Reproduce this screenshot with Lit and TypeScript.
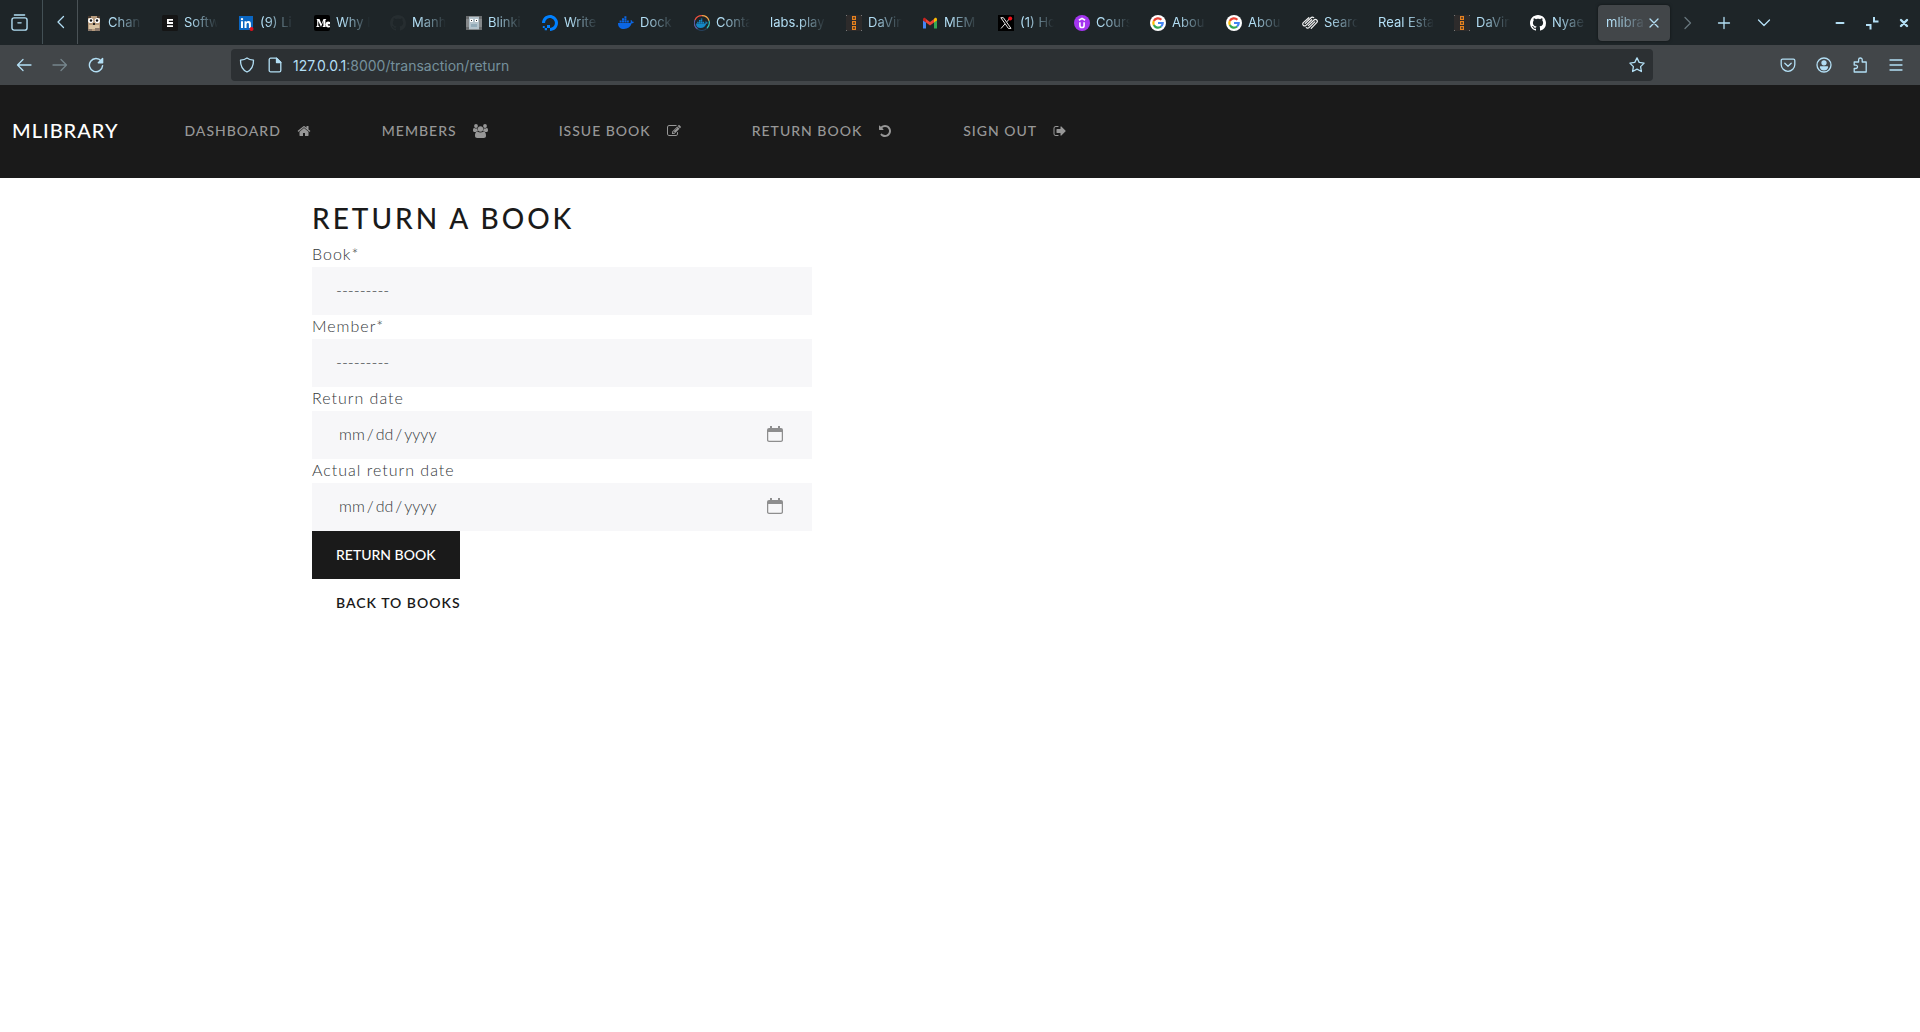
import { LitElement, html, svg, css } from "lit";
import type { TemplateResult } from "lit";

type Pic = TemplateResult;

const box = (size: number, view: string, body: Pic): Pic =>
  html`<svg width=${size} height=${size} viewBox=${view} aria-hidden="true">${body}</svg>`;
const line = (body: Pic, size = 16, width = 1.3): Pic =>
  html`<svg width=${size} height=${size} viewBox="0 0 16 16" fill="none" stroke="currentColor"
    stroke-width=${width} stroke-linecap="round" stroke-linejoin="round" aria-hidden="true">${body}</svg>`;

/* ---------- tab favicons ---------- */
const gopher = box(16, "0 0 16 16", svg`
  <rect x="2" y="1" width="12" height="15" rx="1" fill="#b59a7c"/>
  <path d="M2 1h3v2H2zM11 1h3v2h-3z" fill="#4a3b30"/>
  <rect x="3" y="10" width="10" height="4" fill="#d9c4a4"/>
  <path d="M2 14h4v2H2zM9 13h5v3H9z" fill="#8c7a6c"/>
  <circle cx="4.7" cy="5.5" r="2.600" fill="#fff"/><circle cx="11.3" cy="5.5" r="2.600" fill="#fff"/>
  <circle cx="5" cy="5.5" r="1.2" fill="#111"/><circle cx="11" cy="5.5" r="1.2" fill="#111"/>
  <rect x="7" y="8" width="2" height="2" fill="#222"/>`);
const eLogo = box(16, "0 0 16 16", svg`
  <rect width="16" height="16" rx="1.5" fill="#151515"/>
  <path d="M5 4h6v1.800H5zM5 5h1.800v3H5zM5 7.100h6v1.800H5zM5 10.200h6V12H5z" fill="#fff"/>`);
const linkedin = box(16, "0 0 16 16", svg`
  <rect x="1" y="1" width="14" height="14" fill="#0a66c2"/>
  <path d="M3 6.300h2V13H3zM6.500 6.300h1.900v.9c.4-.7 1.100-1.100 2-1.100 2 0 2.500 1.200 2.500 3V13h-2V9.500c0-.9-.2-1.600-1.100-1.600-.9 0-1.300.6-1.300 1.600V13h-2z" fill="#fff"/>
  <circle cx="4" cy="4.100" r="1.200" fill="#fff"/><circle cx="13.500" cy="14" r="2" fill="#e0101c"/>`);
const medium = box(16, "0 0 16 16", svg`
  <rect width="16" height="16" rx="2" fill="#000"/>
  <path d="M2.500 4h3l2 5 2-5h2.700v.5l-.8.600v6.300l.8.600H8.600v-.6l.8-.6V6L7 12.100 4.300 6v4.600l1.100 1v.4H2.300v-.5l.9-.9V5.300z" fill="#fff"/>
  <path d="M16 7a3 3 0 1 0 0 5v-1.500c-1.300.6-2.100 0-2.200-1.300H16z" fill="#fff"/>`);
const githubPath = svg`<path fill="currentColor" d="M8 0C3.580 0 0 3.580 0 8c0 3.540 2.290 6.530 5.470 7.590.4.07.55-.17.55-.38 0-.19-.01-.82-.01-1.490-2.010.37-2.530-.49-2.690-.94-.09-.23-.48-.94-.82-1.130-.28-.15-.68-.52-.01-.53.63-.01 1.080.58 1.230.82.72 1.210 1.870.87 2.330.66.07-.52.28-.87.51-1.070-1.780-.2-3.640-.89-3.640-3.950 0-.87.31-1.590.82-2.150-.08-.2-.36-1.020.08-2.120 0 0 .67-.21 2.200.82.64-.18 1.320-.27 2-.27.68 0 1.360.09 2 .27 1.530-1.040 2.200-.82 2.200-.82.44 1.100.16 1.920.08 2.120.51.56.82 1.270.82 2.150 0 3.070-1.870 3.750-3.650 3.950.29.25.54.73.54 1.480 0 1.070-.01 1.930-.01 2.200 0 .21.15.46.55.38A8.013 8.013 0 0 0 16 8c0-4.420-3.580-8-8-8z"/>`;
const githubDark = html`<span class="dark">${box(16, "0 0 16 16", githubPath)}</span>`;
const githubLight = html`<span class="light">${box(16, "0 0 16 16", githubPath)}</span>`;
const robot = box(16, "0 0 16 16", svg`
  <rect y="1" width="16" height="14" fill="#85888a"/><rect x="3" y="2" width="10" height="12" fill="#b4c3cc"/>
  <rect x="4" y="4" width="3" height="3" fill="#fff"/><rect x="9" y="4" width="3" height="3" fill="#fff"/>
  <rect x="5" y="5" width="1" height="1" fill="#333"/><rect x="10" y="5" width="1" height="1" fill="#333"/>
  <rect x="5" y="9" width="6" height="3" fill="#93abb8"/><path d="M0 1h3v3H0zM13 1h3v3h-3zM0 12h3v3H0zM13 12h3v3h-3z" fill="#6a6d6f"/>`);
const digitalOcean = box(16, "0 0 16 16", svg`
  <path d="M8 16v-3.100c3.300 0 5.800-3.300 4.600-6.700A4.700 4.700 0 0 0 9.800 3.400C6.400 2.200 3.100 4.700 3.100 8H0C0 2.800 5.100-1.300 10.500.4c2.400.7 4.300 2.700 5.100 5.100C17.300 10.900 13.200 16 8 16z" fill="#0080ff"/>
  <path d="M5 9.900h3V13H5zM2.700 13H5v2.300H2.700zM.8 11.100h1.900V13H.8z" fill="#0080ff"/>`);
const whale = svg`<path d="M0 8h12.300c.5-.6.700-1.400.2-2.500l.6-.6c.9.500 1.200 1.100 1.200 1.800.6-.1 1.300 0 1.700.3-.4.900-1.200 1.300-2.300 1.300C12.500 12 9.800 14 6 14 2.200 14 0 12 0 8zM1.600 5.600h2v1.900h-2zM4 5.600h2v1.900H4zM6.400 5.600h2v1.900h-2zM8.800 5.600h2v1.900h-2zM4 3.300h2v1.900H4zM6.400 3.300h2v1.900h-2zM6.400 1.200h2v1.700h-2z"/>`;
const docker = box(16, "0 0 16 16", svg`<g fill="#0b66e4">${whale}</g>`);
const dockerRing = box(16, "0 0 16 16", svg`
  <g fill="none" stroke-width="1.200"><path d="M1 5a7.400 7.400 0 0 1 7-4.300" stroke="#f0523f"/><path d="M8 .7a7.400 7.400 0 0 1 7 5" stroke="#f6a54a"/>
  <path d="M15 5.700a7.400 7.400 0 0 1-2 7.500" stroke="#35c3b8"/><path d="M13 13.200a7.400 7.400 0 0 1-9.500.7" stroke="#26415c"/><path d="M3.500 13.900A7.400 7.400 0 0 1 1 5" stroke="#5b5ea8"/></g>
  <g fill="#1488c6" transform="translate(2 2.500) scale(.75)">${whale}</g>`);
const daVinci = box(16, "0 0 16 16", svg`
  <rect width="16" height="16" fill="#2d2b2b"/>
  <g fill="none" stroke="#e8821e" stroke-width="1.200"><rect x="6.600" y="1.600" width="2.800" height="2.800"/><rect x="6.600" y="6.600" width="2.800" height="2.800"/><rect x="6.600" y="11.600" width="2.800" height="2.800"/></g>
  <path d="M0 0h1v1H0zM15 0h1v1h-1zM0 15h1v1H0zM15 15h1v1h-1z" fill="#777"/>`);
const gmail = box(16, "0 0 16 16", svg`
  <path d="M1 5v8.500h3V7.300z" fill="#4285f4"/><path d="M15 5v8.500h-3V7.300z" fill="#34a853"/>
  <path d="M4 4v3.600l4 3 4-3V4L8 7z" fill="#ea4335"/><path d="M1 4.200v1.200l3 2.200V4L3.300 3C2.300 2.300 1 3 1 4.200z" fill="#c5221f"/>
  <path d="M15 4.200v1.200l-3 2.200V4l.7-1c1-.7 2.300 0 2.300 1.200z" fill="#fbbc04"/>`);
const xLogo = box(16, "0 0 16 16", svg`
  <rect width="16" height="16" fill="#000"/>
  <g fill="none" stroke="#e8e8e8"><path d="M2.800 2.700h2.600l7.600 10.700h-2.600z"/><path d="M12.400 2.600 8.900 6.800M6.900 9 3 13.500"/></g>
  <circle cx="12.200" cy="3.500" r="2" fill="#f0121c"/>`);
const udemy = box(16, "0 0 16 16", svg`
  <circle cx="8" cy="8" r="8" fill="#a435f0"/>
  <path d="M4.900 5.200 8 3.400l3.100 1.800M5.900 7.300v3.100c0 2.800 4.200 2.800 4.200 0V7.300" fill="none" stroke="#fff" stroke-width="1.600"/>`);
const google = box(16, "0 0 16 16", svg`
  <circle cx="8" cy="8" r="8" fill="#fff"/><g fill="none" stroke-width="2.200">
  <path d="M11.400 4.700A4.700 4.700 0 0 0 3.800 6" stroke="#ea4335"/><path d="M3.800 6a4.700 4.700 0 0 0 0 4.100" stroke="#fbbc05"/>
  <path d="M3.800 10.100a4.700 4.700 0 0 0 7.300 1.400" stroke="#34a853"/><path d="M11.100 11.500A4.600 4.600 0 0 0 12.700 8H8" stroke="#4285f4"/></g>`);
const squarespace = box(16, "0 0 16 16", svg`
  <g fill="none" stroke="#f4f4f4" stroke-width="1.200" stroke-linecap="round">
  <path d="M6.800 2.700 1.300 7.600a1.900 1.900 0 0 0 2.700 2.700L9.700 4.700"/>
  <path d="M3.200 8.400 9 2.700a1.900 1.900 0 0 1 2.700 0"/>
  <path d="M4.300 12.600a1.900 1.900 0 0 0 2.700 0l5.800-5.700"/>
  <path d="M6.300 10.600 12 5a1.900 1.900 0 0 1 2.700 2.700l-5.500 5.600"/></g>`);

const tabs: { icon?: Pic; title: string; active?: boolean }[] = [
  { icon: gopher, title: "Chan" },
  { icon: eLogo, title: "Softw" },
  { icon: linkedin, title: "(9) Li" },
  { icon: medium, title: "Why I" },
  { icon: githubDark, title: "Manh" },
  { icon: robot, title: "Blinki" },
  { icon: digitalOcean, title: "Write" },
  { icon: docker, title: "Dock" },
  { icon: dockerRing, title: "Conta" },
  { title: "labs.play" },
  { icon: daVinci, title: "DaVin" },
  { icon: gmail, title: "MEM" },
  { icon: xLogo, title: "(1) Ho" },
  { icon: udemy, title: "Cours" },
  { icon: google, title: "Abou" },
  { icon: google, title: "Abou" },
  { icon: squarespace, title: "Searc" },
  { title: "Real Esta" },
  { icon: daVinci, title: "DaVin" },
  { icon: githubLight, title: "Nyae" },
  { title: "mlibra", active: true },
];

/* ---------- browser icons ---------- */
const history = line(svg`<path d="M3.200 1h9.600"/><rect x=".9" y="3.600" width="14.200" height="11.600" rx="2"/><path d="M6.500 8.300h3"/>`, 17);
const chevLeft = line(svg`<path d="M10.500 2.500 5 8l5.500 5.500"/>`);
const chevRight = line(svg`<path d="M5 2.500 10.500 8 5 13.500"/>`);
const chevDown = line(svg`<path d="M2.500 5 8 10.500 13.500 5"/>`);
const plus = line(svg`<path d="M8 2.500v11M2.500 8h11"/>`);
const cross = line(svg`<path d="M4 4l8 8M12 4l-8 8"/>`);
const back = line(svg`<path d="M15 8H1.500M7 2.500 1.500 8 7 13.500"/>`);
const forward = line(svg`<path d="M1 8h13.500M9 2.500 14.500 8 9 13.500"/>`);
const reload = line(svg`<path d="M13.200 4A6.600 6.600 0 1 0 14.600 8.600"/><path d="M14.600 1.500v4.300h-4.300z" fill="currentColor"/>`, 16, 1.4);
const shield = line(svg`<path d="M8 1C6.500 2.200 4 3 1.500 3.200 1.400 8.500 3.200 12.700 8 15c4.800-2.300 6.600-6.500 6.500-11.800C12 3 9.500 2.200 8 1z"/>`);
const page = line(svg`<path d="M9.500 1.200H3.600A1.400 1.400 0 0 0 2.200 2.600v10.800a1.400 1.400 0 0 0 1.400 1.400h8.800a1.400 1.400 0 0 0 1.400-1.400V5.500z"/><path d="M9.500 1.200v4.300h4.300z" fill="currentColor"/>`);
const star = line(svg`<path d="M8 .9l2.200 4.500 4.900.7-3.500 3.500.8 4.900L8 12.200l-4.400 2.300.8-4.900L.9 6.100l4.900-.7z"/>`);
const pocket = line(svg`<path d="M2.500 2.200h11a1.300 1.300 0 0 1 1.300 1.300V7.500a6.800 6.800 0 0 1-13.600 0V3.500a1.300 1.300 0 0 1 1.300-1.300z"/><path d="M4.800 6.300 8 9.300l3.200-3"/>`);
const account = line(svg`<circle cx="8" cy="8" r="7"/><circle cx="8" cy="5.800" r="2" fill="currentColor"/><path d="M4.500 10h7c-.5 2-2 2.800-3.500 2.800S5 12 4.500 10z" fill="currentColor"/>`);
const puzzle = line(svg`<path d="M2.200 15V11.500h1.600a1.700 1.700 0 0 0 0-3.400H2.200V5h4.400V2.800a1.800 1.800 0 0 1 3.600 0V5h4V15z"/>`);
const menu = line(svg`<path d="M2 3h12M2 8h12M2 13h12"/>`);
const minimize = line(svg`<path d="M4.500 8h7"/>`, 16, 2);
const restore = html`<svg width="16" height="16" viewBox="0 0 16 16" fill="none" stroke="currentColor" stroke-width="2" aria-hidden="true"><path d="M10 2v4.500h4.500M2 10h4.500v4.500"/></svg>`;
const closeWin = line(svg`<path d="M5 5l6 6M11 5l-6 6"/>`, 16, 2.4);

/* ---------- site navigation icons, drawn on a 1792 unit grid ---------- */
const glyph = (body: Pic): Pic =>
  html`<svg width="14" height="14" viewBox="0 0 1792 1792" fill="currentColor" aria-hidden="true">${body}</svg>`;
const home = glyph(svg`<path d="M1472 992v480q0 26-19 45t-45 19h-384v-384h-256v384h-384q-26 0-45-19t-19-45v-480l576-476 576 476zm223-69l-62 74q-8 9-21 11h-3q-13 0-21-7l-692-577-692 577q-12 8-24 7-13-2-21-11l-62-74q-8-10-7-23.500t11-21.500l719-599q32-26 76-26t76 26l244 204v-195q0-14 9-23t23-9h192q14 0 23 9t9 23v408l219 182q10 8 11 21.500t-7 23.500z"/>`);
const users = html`<svg width="15" height="14" viewBox="0 0 15 14" fill="currentColor" aria-hidden="true">
  <circle cx="3" cy="2" r="1.900"/><circle cx="12" cy="2" r="1.900"/><circle cx="7.500" cy="5" r="2.700"/>
  <path d="M0 6.200C0 4.500.6 3.900 1.300 3.900c1 .6 2.200.7 3.200.3-.2 1.300 0 2.100.7 2.900-.9 0-1.700.3-2.200.9H1.500C.6 8 0 7.400 0 6.200zM15 6.200c0-1.700-.6-2.300-1.300-2.300-1 .6-2.200.7-3.200.3.200 1.300 0 2.100-.7 2.900.9 0 1.700.3 2.200.9h1.500c.9 0 1.500-.6 1.500-1.800z"/>
  <path d="M2 11.800c0-2.500.7-4.200 2.400-4.200 1.900 1.300 4.300 1.300 6.200 0 1.700 0 2.400 1.700 2.400 4.200 0 1.400-.9 2.200-2.200 2.200H4.200C2.900 14 2 13.200 2 11.800z"/></svg>`;
const edit = glyph(svg`<path d="M888 1184l116-116-152-152-116 116v56h96v96h56zm440-720q-16-16-33 1l-350 350q-17 17-1 33t33-1l350-350q17-17 1-33zm80 594v190q0 119-84.500 203.500t-203.500 84.500h-832q-119 0-203.500-84.500t-84.500-203.500v-832q0-119 84.500-203.500t203.500-84.500h832q63 0 117 25 15 7 18 23 3 17-9 29l-49 49q-14 14-32 8-23-6-45-6h-832q-66 0-113 47t-47 113v832q0 66 47 113t113 47h832q66 0 113-47t47-113v-126q0-13 9-22l64-64q15-15 35-7t20 29zm-96-738l288 288-672 672h-288v-288zm444 132l-92 92-288-288 92-92q28-28 68-28t68 28l152 152q28 28 28 68t-28 68z"/>`);
const undo = glyph(svg`<path d="M1664 896q0 156-61 298t-164 245-245 164-298 61q-172 0-327-72.500t-264-204.500q-7-10-6.500-22.500t8.500-20.500l137-138q10-9 25-9 16 2 23 12 73 95 179 147t225 52q104 0 198.500-40.500t163.500-109.500 109.500-163.500 40.500-198.500-40.500-198.500-109.500-163.500-163.500-109.500-198.500-40.500q-98 0-188 35.500t-160 101.500l137 138q31 30 14 69-17 40-59 40h-448q-26 0-45-19t-19-45v-448q0-42 40-59 39-17 69 14l130 129q107-101 244.500-156.500t284.500-55.500q156 0 298 61t245 164 164 245 61 298z"/>`);
const signOut = glyph(svg`<path d="M704 1440q0 4 1 20t.5 26.500-3 23.500-10 19.500-20.500 6.500h-320q-119 0-203.500-84.500t-84.500-203.500v-704q0-119 84.500-203.500t203.500-84.500h320q13 0 22.500 9.500t9.500 22.500q0 4 1 20t.5 26.500-3 23.500-10 19.500-20.500 6.500h-320q-66 0-113 47t-47 113v704q0 66 47 113t113 47h312l11.500 1 11.500 3 8 5.500 7 9 2 13.500zm928-544q0 26-19 45l-544 544q-19 19-45 19t-45-19-19-45v-288h-448q-26 0-45-19t-19-45v-384q0-26 19-45t45-19h448v-288q0-26 19-45t45-19 45 19l544 544q19 19 19 45z"/>`);
const calendar = html`<svg class="cal" width="16" height="16" viewBox="0 0 16 16" fill="none" aria-hidden="true">
  <path d="M3 0h2v2h6V0h2v2h1a2 2 0 0 1 2 2v2H0V4a2 2 0 0 1 2-2h1z" fill="#8e8e8f"/>
  <path d="M.6 5v8.900c0 .8.600 1.400 1.400 1.400h12c.8 0 1.400-.6 1.400-1.400V5" stroke="#8e8e8f" stroke-width="1.300"/></svg>`;

class BrowserChrome extends LitElement {
  static styles = css`
    :host { display: block; background: #1e2528; color: #b3dff5; font-family: Inter, sans-serif; }
    button { all: unset; box-sizing: border-box; display: flex; align-items: center; justify-content: center; cursor: pointer; flex: none; }
    svg { display: block; flex: none; }
    .strip { display: flex; align-items: center; height: 45px; }
    .history { width: 43px; height: 44px; padding-right: 3px; border-right: 1px solid #435055; align-self: flex-start; }
    .prev { width: 35px; height: 44px; padding-left: 2px; border-right: 1px solid #4a5256; align-self: flex-start; }
    .tabs { display: flex; gap: 4px; flex: 0 1 1592px; min-width: 0; }
    .tab { flex: 1 1 0; min-width: 0; height: 36px; padding: 0 0 0 8px; gap: 6px; justify-content: flex-start; border-radius: 4px; font-size: 13px; line-height: 20px; }
    .title { flex: 1; min-width: 0; padding-bottom: 2px; overflow: hidden; white-space: nowrap; mask-image: linear-gradient(to left, transparent 8px, #000 36px); -webkit-mask-image: linear-gradient(to left, transparent 8px, #000 36px); }
    .tab.active { background: #424649; box-shadow: 0 0 3px #0008; gap: 0; }
    .active svg { margin-right: 8px; }
    .active .title { mask-image: linear-gradient(to left, transparent, #000 32px); -webkit-mask-image: linear-gradient(to left, transparent, #000 32px); }
    .dark { color: #262d30; }
    .light { color: #fff; }
    .next { width: 36px; color: #66757c; }
    .small { width: 36px; }
    .list { width: 44px; }
    .window { display: flex; margin-left: auto; }
    .window button { width: 32px; }
    .bar { display: flex; align-items: center; height: 40px; background: #424649; padding: 0 6px; }
    .bar .off { color: #75858c; }
    .address { flex: 1; min-width: 0; display: flex; align-items: center; gap: 12px; height: 32px; margin: 0 117px; padding: 0 8px; background: #2c3033; border-radius: 4px; }
    .url { flex: 1; min-width: 0; margin-left: -2px; padding-top: 2px; font-size: 14px; line-height: 20px; color: #75909c; white-space: nowrap; }
    .url b { font-weight: 400; color: #b3dff5; }
  `;
  render() {
    return html`
      <div class="strip">
        <button class="history" aria-label="View history">${history}</button>
        <button class="prev" aria-label="Scroll tabs left">${chevLeft}</button>
        <div class="tabs">
          ${tabs.map((t) => html`<button class="tab ${t.active ? "active" : ""}">
            ${t.icon}<span class="title">${t.title}</span>${t.active ? cross : ""}</button>`)}
        </div>
        <button class="next" aria-label="Scroll tabs right">${chevRight}</button>
        <button class="small" aria-label="New tab">${plus}</button>
        <button class="list" aria-label="List all tabs">${chevDown}</button>
        <div class="window">
          <button aria-label="Minimize">${minimize}</button>
          <button aria-label="Restore">${restore}</button>
          <button aria-label="Close">${closeWin}</button>
        </div>
      </div>
      <div class="bar">
        <button class="small" aria-label="Back">${back}</button>
        <button class="small off" aria-label="Forward">${forward}</button>
        <button class="small" aria-label="Reload">${reload}</button>
        <div class="address">
          ${shield}${page}
          <span class="url"><b>127.0.0.1</b>:8000/transaction/return</span>
          <button aria-label="Bookmark">${star}</button>
        </div>
        <button class="small" aria-label="Pocket">${pocket}</button>
        <button class="small" aria-label="Account">${account}</button>
        <button class="small" aria-label="Extensions">${puzzle}</button>
        <button class="small" aria-label="Menu">${menu}</button>
      </div>`;
  }
}
customElements.define("browser-chrome", BrowserChrome);

const links: [string, Pic][] = [
  ["Dashboard", home],
  ["Members", users],
  ["Issue Book", edit],
  ["Return Book", undo],
  ["Sign Out", signOut],
];

class SiteNav extends LitElement {
  static styles = css`
    :host { display: block; font-family: Lato, sans-serif; }
    nav { display: flex; align-items: center; padding: 23px 12px 25px; background: #1a1a1a; text-transform: uppercase; letter-spacing: 1px; }
    a { color: inherit; text-decoration: none; display: flex; align-items: center; }
    .brand { color: #fff; font-size: 20px; line-height: 45px; font-weight: 500; margin-right: 66px; }
    ul { display: flex; gap: 71px; margin: 0; padding: 0; list-style: none; }
    li a { gap: 16px; color: #979797; font-size: 14px; line-height: 20px; font-weight: 500; }
    svg { display: block; }
  `;
  render() {
    return html`<nav>
      <a class="brand" href="#">MLibrary</a>
      <ul>${links.map(([name, icon]) => html`<li><a href="#">${name}${icon}</a></li>`)}</ul>
    </nav>`;
  }
}
customElements.define("site-nav", SiteNav);

class ReturnForm extends LitElement {
  static styles = css`
    :host { display: block; font: 300 16px/24px Lato, sans-serif; color: #33373a; }
    .container { box-sizing: border-box; max-width: 1320px; margin: 0 auto; padding: 22px 12px; }
    h2 { margin: 0 0 6px; font-size: 28px; line-height: 37px; font-weight: 500; letter-spacing: 3px; text-transform: uppercase; color: #1a1a1a; }
    form { display: flex; flex-direction: column; align-items: flex-start; max-width: 500px; }
    label { letter-spacing: 1px; line-height: 22px; padding-bottom: 2px; }
    select, input { box-sizing: border-box; width: 100%; height: 48px; margin: 0; padding: 0 24px 2px; border: 0; border-radius: 0; background: #f7f7f9; font: inherit; color: inherit; appearance: none; outline: none; }
    .date { display: grid; width: 100%; align-items: center; }
    .date > * { grid-area: 1 / 1; }
    .cal { justify-self: end; margin: 0 29px 2px 0; pointer-events: none; }
    input::-webkit-calendar-picker-indicator { opacity: 0; }
    input::-webkit-datetime-edit { padding: 0 2px; }
    input::-webkit-datetime-edit-fields-wrapper { padding: 0; }
    input::-webkit-datetime-edit-text { padding: 0 1px; }
    .submit { height: 48px; padding: 0 24px; border: 0; background: #1a1a1a; color: #fff; font: 500 14px/20px Lato, sans-serif; text-transform: uppercase; cursor: pointer; }
    .back { padding: 14px 24px; font-size: 14px; line-height: 20px; font-weight: 600; letter-spacing: 1px; text-transform: uppercase; text-decoration: none; color: #1a1a1a; }
  `;
  render() {
    return html`<div class="container">
      <h2>Return a book</h2>
      <form @submit=${(e: Event) => e.preventDefault()}>
        <label for="book">Book*</label>
        <select id="book"><option>---------</option></select>
        <label for="member">Member*</label>
        <select id="member"><option>---------</option></select>
        <label for="due">Return date</label>
        <div class="date"><input id="due" type="date">${calendar}</div>
        <label for="actual">Actual return date</label>
        <div class="date"><input id="actual" type="date">${calendar}</div>
        <button class="submit" type="submit">Return Book</button>
        <a class="back" href="#">Back to books</a>
      </form>
    </div>`;
  }
}
customElements.define("return-form", ReturnForm);

class AppRoot extends LitElement {
  static styles = css`:host { display: block; min-height: 100vh; background: #fff; }`;
  render() {
    return html`<browser-chrome></browser-chrome><site-nav></site-nav><return-form></return-form>`;
  }
}
customElements.define("app-root", AppRoot);
